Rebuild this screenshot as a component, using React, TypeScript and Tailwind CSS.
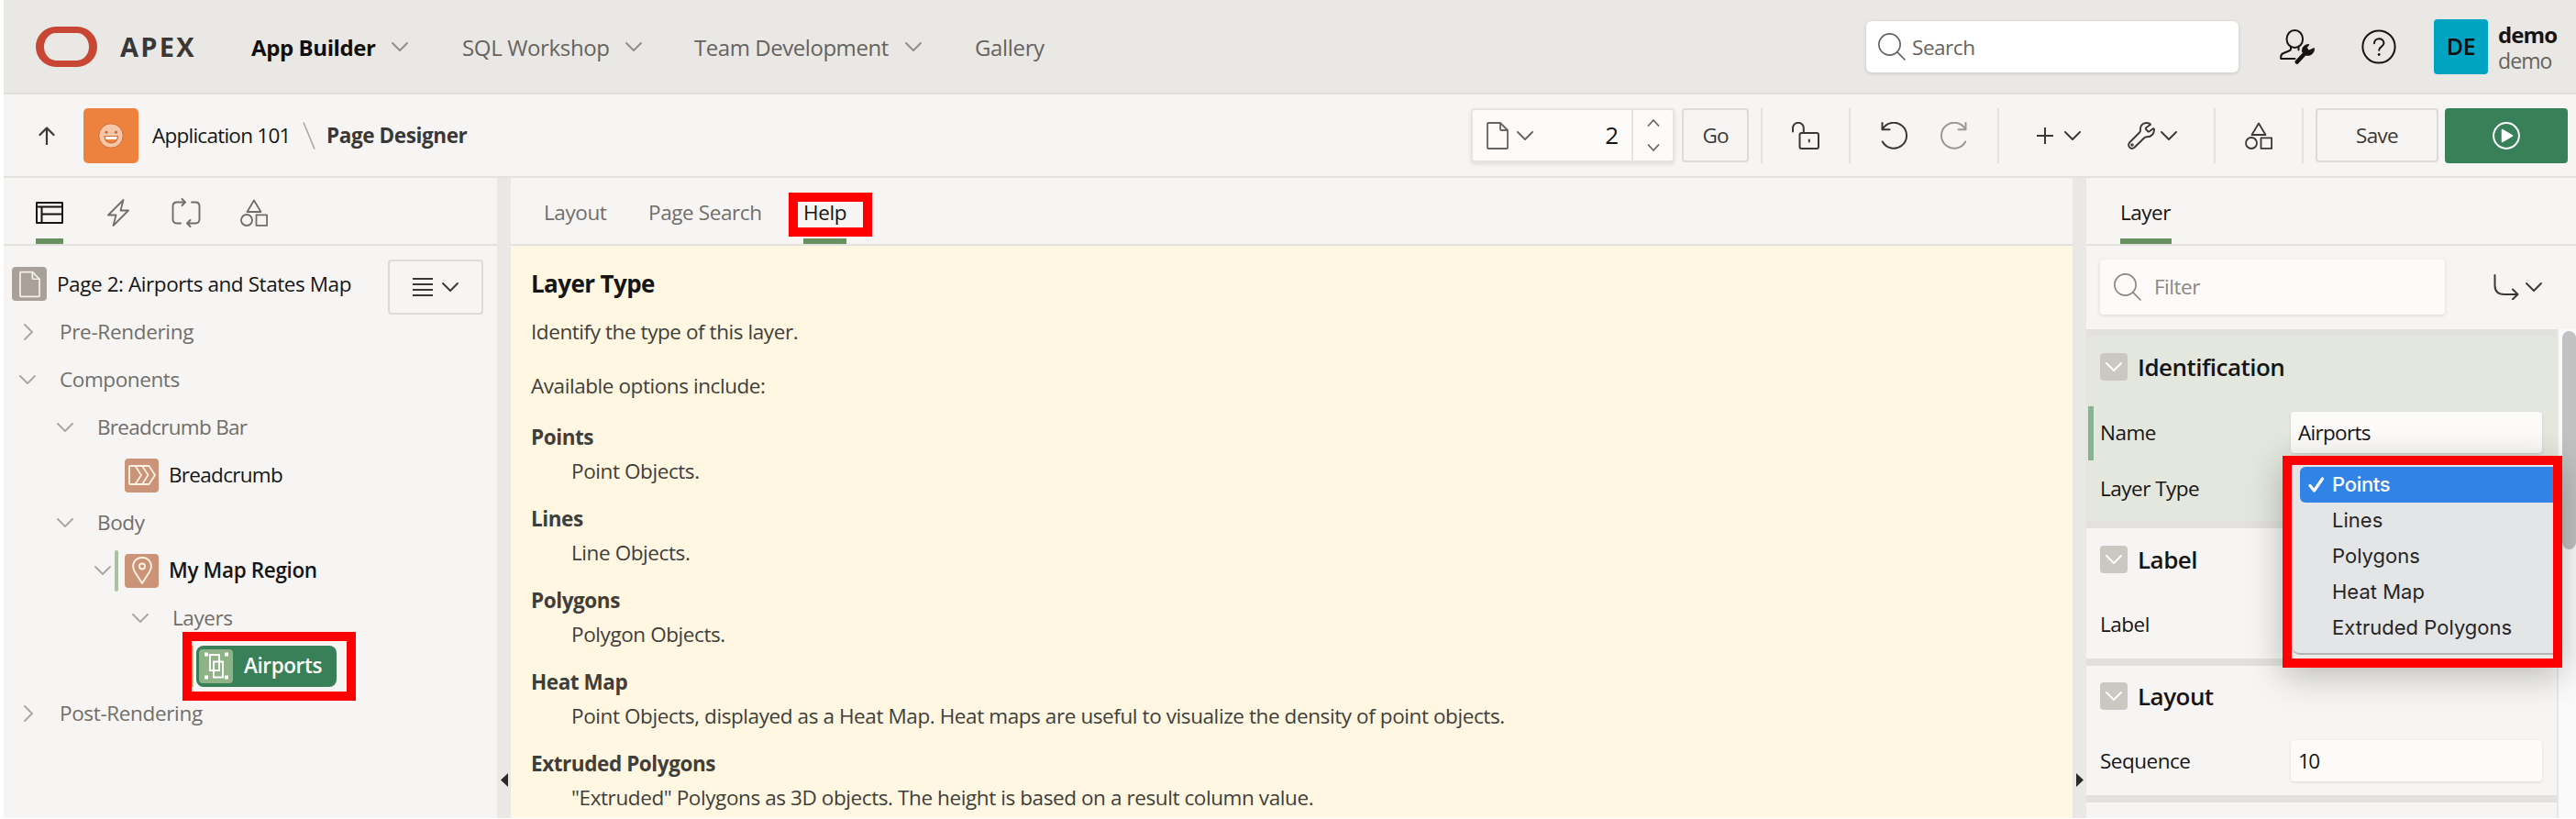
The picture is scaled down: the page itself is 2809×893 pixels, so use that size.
import type { ReactNode } from 'react';

type IconProps = { className?: string };

function Chevron({ className = '' }: IconProps) {
  return (
    <svg viewBox="0 0 18 10" className={'h-[10px] w-[18px] shrink-0 ' + className} fill="none" stroke="currentColor" strokeWidth="1.9" strokeLinecap="round" strokeLinejoin="round">
      <path d="M1 1 L9 9 L17 1" />
    </svg>
  );
}

function ChevronRight({ className = '' }: IconProps) {
  return (
    <svg viewBox="0 0 10 18" className={'h-[18px] w-[10px] shrink-0 ' + className} fill="none" stroke="currentColor" strokeWidth="1.9" strokeLinecap="round" strokeLinejoin="round">
      <path d="M1 1 L9 9 L1 17" />
    </svg>
  );
}

function SearchIcon({ className = '' }: IconProps) {
  return (
    <svg viewBox="0 0 30 30" className={'h-[30px] w-[30px] shrink-0 ' + className} fill="none" stroke="currentColor" strokeWidth="1.7" strokeLinecap="round">
      <circle cx="12.5" cy="12.5" r="11.6" />
      <path d="M20.7 20.7 L29 29" />
    </svg>
  );
}

function Shapes({ className = '' }: IconProps) {
  return (
    <svg viewBox="0 0 30 30" className={'h-[30px] w-[30px] shrink-0 ' + className} fill="none" stroke="currentColor" strokeWidth="1.8" strokeLinejoin="round">
      <path d="M15 1.5 L22.5 14 H7.5 Z" />
      <circle cx="7" cy="23" r="6" />
      <rect x="17.5" y="17.3" width="11.6" height="11.6" />
    </svg>
  );
}

function PageIcon({ className = 'w-[24px]' }: IconProps) {
  return (
    <svg viewBox="0 0 24 30" className={'h-[30px] shrink-0 ' + className} fill="none" stroke="currentColor" strokeWidth="1.8" strokeLinejoin="round">
      <path d="M2 1 H15 L23 9 V28 Q23 29 22 29 H2 Q1 29 1 28 V2 Q1 1 2 1 Z" />
      <path d="M15 1 V8 Q15 9 16 9 H23" />
    </svg>
  );
}

function Undo({ className = '' }: IconProps) {
  return (
    <svg viewBox="0 0 30 30" className={'h-[30px] w-[30px] shrink-0 ' + className} fill="none" stroke="currentColor" strokeWidth="2" strokeLinecap="round" strokeLinejoin="round">
      <path d="M1.5 1 V8.3 H9.5" />
      <path d="M1.8 8 A14 14 0 1 1 1.8 21.5" />
    </svg>
  );
}

function Divider({ className = '' }: IconProps) {
  return <div className={'h-[60px] w-[2px] shrink-0 bg-[#e3e2df] ' + className} />;
}

function Row({ children, className = '' }: { children: ReactNode; className?: string }) {
  return <div className={'flex h-[52px] shrink-0 items-center whitespace-nowrap ' + className}>{children}</div>;
}

function Header() {
  return (
    <header className="flex h-[103px] shrink-0 items-center whitespace-nowrap border-b-2 border-[#dfdedb] bg-[#eae8e4] pt-px text-[24px] text-[#66635f]">
      <div className="ml-[35px] h-[44px] w-[67px] shrink-0 rounded-[22px] border-x-[9px] border-y-[7px] border-[#c74634]" />
      <div className="ml-[25px] w-[143px] text-[29px] font-bold tracking-[2.3px] text-[#3a3835]">APEX</div>
      <div className="flex w-[230px] items-center">
        <div className="w-[153px] pt-[2px] font-bold tracking-[-0.4px] text-[#100f0e]">App Builder</div>
        <Chevron className="text-[#8f8c87]" />
      </div>
      <div className="flex w-[253px] items-center">
        <div className="w-[178px] pt-[2px] tracking-[-0.35px]">SQL Workshop</div>
        <Chevron className="text-[#8f8c87]" />
      </div>
      <div className="flex w-[306px] items-center">
        <div className="w-[230px] pt-[2px] tracking-[-0.45px]">Team Development</div>
        <Chevron className="text-[#8f8c87]" />
      </div>
      <div className="pt-[2px] tracking-[-0.35px]">Gallery</div>
      <div className="ml-auto mr-[45px] flex h-[56px] w-[406px] items-center rounded-[6px] bg-white pl-[13px] shadow-[0_1px_4px_rgba(0,0,0,0.15)]">
        <SearchIcon />
        <div className="ml-[7px] pt-[2px] text-[22.5px] tracking-[-0.45px]">Search</div>
      </div>
      <svg viewBox="0 0 38 38" className="mr-[51px] h-[38px] w-[38px] shrink-0 text-[#161513]" fill="none" stroke="currentColor" strokeWidth="2" strokeLinecap="round" strokeLinejoin="round">
        <ellipse cx="16.3" cy="10.500" rx="8.800" ry="9.500" />
        <path d="M12 19.500 V21.500 Q12 23 10 23.500 L4 26 Q1.200 27.200 1.200 30 V32 H16.500" />
        <path d="M20.500 19.500 V22.500" />
        <path d="M18.800 35.500 L28 25.500" strokeWidth="4.500" />
        <path d="M24.500 24.500 C23.500 20 27 16 32 16.500 L29.500 20 L31.500 23 L37.500 20.500 C38 26 33 30 28 28 Z" fill="currentColor" strokeWidth="0.800" />
      </svg>
      <svg viewBox="0 0 38 38" className="mr-[41px] h-[38px] w-[38px] shrink-0 text-[#161513]" fill="none" stroke="currentColor" strokeWidth="2" strokeLinecap="round">
        <circle cx="19" cy="19" r="17.600" />
        <path d="M14 15.200 C14 8.600 24.500 8.600 24.500 15 C24.500 19 19.200 18.800 19.200 22.800" />
        <circle cx="19.200" cy="27.500" r="1.400" fill="currentColor" stroke="none" />
      </svg>
      <div className="flex h-[60px] w-[59px] shrink-0 items-center justify-center rounded-[4px] bg-[#00a3c1] text-[25px] font-semibold tracking-[-0.5px] text-[#100f0e]">DE</div>
      <div className="ml-[11px] w-[85px] pt-[2px] text-[24px] leading-[29.5px]">
        <div className="font-bold tracking-[-0.9px] text-[#161513]">demo</div>
        <div className="text-[23px] tracking-[-0.9px]">demo</div>
      </div>
    </header>
  );
}

function Toolbar() {
  return (
    <div className="flex h-[91px] shrink-0 items-center whitespace-nowrap border-b-2 border-[#e3e2df] text-[22.5px] text-[#3a3835]">
      <svg viewBox="0 0 18 20" className="ml-[38px] h-[20px] w-[18px] shrink-0" fill="none" stroke="currentColor" strokeWidth="2.2" strokeLinecap="round" strokeLinejoin="round">
        <path d="M9 19 V1.5 M1.5 9 L9 1.5 L16.5 9" />
      </svg>
      <div className="ml-[31px] flex h-[60px] w-[60px] shrink-0 items-center justify-center rounded-[5px] bg-[#ed813e]">
        <svg viewBox="0 0 28 28" className="h-[28px] w-[28px]">
          <circle cx="14" cy="14" r="13.200" fill="#f6c6a8" stroke="#d0703a" strokeWidth="1" />
          <circle cx="9" cy="10.200" r="1.600" fill="#cf6c33" />
          <circle cx="19.500" cy="10.200" r="1.600" fill="#cf6c33" />
          <path d="M7 14.500 H21.500 C21.500 24.500 7 24.500 7 14.500 Z" fill="#ed813e" stroke="#cf6c33" strokeWidth="1.200" strokeLinejoin="round" />
          <path d="M7.800 15 H20.700 L20 18 H8.500 Z" fill="#fff" />
        </svg>
      </div>
      <div className="ml-[15px] w-[164px] tracking-[-0.75px] text-[#161513]">Application 101</div>
      <svg viewBox="0 0 14 30" className="h-[30px] w-[14px] shrink-0" stroke="#aaa7a2" strokeWidth="1.6">
        <path d="M1 0.500 L13 29.500" />
      </svg>
      <div className="ml-[12px] font-bold tracking-[-0.4px]">Page Designer</div>

      <div className="ml-auto flex h-[59px] w-[222px] shrink-0 items-center rounded-[4px] border-2 border-[#e5e4e1] bg-[#fcfbfa] text-[#66635f] shadow-[0_2px_4px_rgba(0,0,0,0.1)]">
        <PageIcon className="ml-[15px] w-[24px]" />
        <Chevron className="ml-[9px]" />
        <div className="ml-auto mr-[14px] text-[26px] text-[#161513]">2</div>
        <div className="flex h-full w-[45px] flex-col items-center justify-center gap-[19px] border-l-2 border-[#e5e4e1]">
          <svg viewBox="0 0 14 8" className="h-[8px] w-[14px]" fill="none" stroke="currentColor" strokeWidth="1.6"><path d="M1 7.500 L7 1 L13 7.500" /></svg>
          <svg viewBox="0 0 14 8" className="h-[8px] w-[14px]" fill="none" stroke="currentColor" strokeWidth="1.6"><path d="M1 0.500 L7 7 L13 0.500" /></svg>
        </div>
      </div>
      <div className="ml-[8px] flex h-[59px] w-[73px] shrink-0 items-center justify-center rounded-[4px] border-2 border-[#dcdbd8] tracking-[-0.9px]">Go</div>
      <Divider className="ml-[13px]" />
      <svg viewBox="0 0 30 30" className="ml-[32px] h-[30px] w-[30px] shrink-0" fill="none" stroke="currentColor" strokeWidth="2" strokeLinecap="round">
        <rect x="8.500" y="12" width="20.500" height="17" rx="2" />
        <path d="M1 10.500 V6.500 A5.900 5.700 0 0 1 12.800 6.500 V11" />
        <path d="M18.800 19.500 V21.500" />
      </svg>
      <Divider className="ml-[32px]" />
      <Undo className="ml-[33px]" />
      <Undo className="ml-[34px] -scale-x-100 text-[#9b9894]" />
      <Divider className="ml-[33px]" />
      <svg viewBox="0 0 18 18" className="ml-[41px] h-[18px] w-[18px] shrink-0" stroke="currentColor" strokeWidth="2"><path d="M9 0 V18 M0 9 H18" /></svg>
      <Chevron className="ml-[12px]" />
      <svg viewBox="0 0 30 30" className="ml-[51px] h-[30px] w-[30px] shrink-0" fill="none" stroke="currentColor" strokeWidth="1.900" strokeLinejoin="round">
        <path d="M24.800 3 C25.500 1.800 23 1 20.500 1 C16 1 13.500 4.500 14 9 Q14 10.500 13 11.500 L2.500 22 C-1 26 3.500 31 7.500 27.800 L18 17.500 Q19 16.500 21 16.300 C26 16.300 29.200 13 29 8 Q28.500 6.800 27.500 7.500 L23.500 10.500 Q22.500 11 22 10 L20 7.800 Q19.500 6.800 20.500 6 Z" />
        <circle cx="5" cy="25" r="0.700" fill="currentColor" />
      </svg>
      <Chevron className="ml-[6px]" />
      <Divider className="ml-[40px]" />
      <Shapes className="ml-[32px]" />
      <Divider className="ml-[32px]" />
      <div className="ml-[13px] flex h-[59px] w-[134px] shrink-0 items-center justify-center rounded-[4px] border-2 border-[#dcdbd8] tracking-[-0.7px]">Save</div>
      <div className="ml-[7px] mr-[9px] flex h-[60px] w-[134px] shrink-0 items-center justify-center rounded-[4px] bg-[#388057]">
        <svg viewBox="0 0 30 30" className="h-[30px] w-[30px]">
          <circle cx="15" cy="15" r="13.900" fill="none" stroke="#fff" strokeWidth="2" />
          <path d="M10.500 8.500 L21.500 15 L10.500 21.500 Z" fill="#fff" stroke="#fff" strokeWidth="1.500" strokeLinejoin="round" />
        </svg>
      </div>
    </div>
  );
}

function TreePanel() {
  return (
    <aside className="flex w-[538px] shrink-0 flex-col text-[22.5px] text-[#716e6a]">
      <div className="flex h-[74px] shrink-0 items-stretch border-b-2 border-[#e3e2df]">
        <div className="ml-[35px] flex w-[30px] flex-col justify-between text-[#161513]">
          <svg viewBox="0 0 30 24" className="mt-[26px] h-[24px] w-[30px]" fill="none" stroke="currentColor" strokeWidth="2" strokeLinejoin="round">
            <path d="M1 1 H29 V23 H1 Z M1 5.500 H29 M6.500 5.500 V23 M6.500 13.500 H29" />
          </svg>
          <div className="h-[6px] bg-[#699061]" />
        </div>
        <svg viewBox="0 0 24 30" className="ml-[48px] mt-[23px] h-[30px] w-[24px]" fill="none" stroke="currentColor" strokeWidth="1.800" strokeLinejoin="round">
          <path d="M17.500 1 L1 17.500 H9.500 L6.500 29 L23 12.500 H14.500 Z" />
        </svg>
        <svg viewBox="0 0 32 32" className="ml-[46px] mt-[22px] h-[32px] w-[32px]" fill="none" stroke="currentColor" strokeWidth="1.900" strokeLinecap="round" strokeLinejoin="round">
          <path d="M10 27.500 H6 Q1.500 27.500 1.500 23 V9 Q1.500 4.500 6 4.500 H15 M11.500 1 L15 4.500 L11.500 8" />
          <path d="M22 4.500 H26 Q30.500 4.500 30.500 9 V23 Q30.500 27.500 26 27.500 H17 M20.500 24 L17 27.500 L20.500 31" />
        </svg>
        <Shapes className="ml-[43px] mt-[23px]" />
      </div>

      <div className="relative flex flex-1 flex-col pt-[16px]">
        <div className="flex h-[52px] shrink-0 items-start whitespace-nowrap">
          <div className="ml-[9px] mt-[7px] flex h-[37px] w-[38px] items-center justify-center rounded-[4px] bg-[#a9a199] text-[#f3f1ee]">
            <PageIcon className="w-[23px]" />
          </div>
          <div className="ml-[11px] w-[361px] tracking-[-0.42px] leading-[52px] text-[#161513]">Page 2: Airports and States Map</div>
          <div className="-mt-px flex h-[60px] w-[104px] shrink-0 items-center justify-center gap-[10px] rounded-[4px] border-2 border-[#dcdbd8] text-[#3a3835]">
            <svg viewBox="0 0 22 20" className="h-[20px] w-[22px]" stroke="currentColor" strokeWidth="2"><path d="M0 1 H22 M0 7 H22 M0 13 H22 M0 19 H22" /></svg>
            <Chevron />
          </div>
        </div>
        <Row className="pl-[22px]"><ChevronRight className="mr-[29px] text-[#aaa7a2]" /><span className="tracking-[-0.32px]">Pre-Rendering</span></Row>
        <Row className="pl-[17px]"><Chevron className="mr-[26px] text-[#aaa7a2]" /><span className="tracking-[-0.4px]">Components</span></Row>
        <Row className="pl-[58px]"><Chevron className="mr-[26px] text-[#aaa7a2]" /><span className="tracking-[-0.7px]">Breadcrumb Bar</span></Row>
        <Row className="pl-[132px] text-[#161513]">
          <div className="mr-[11px] flex h-[37px] w-[37px] items-center justify-center rounded-[4px] bg-[#cb9378]">
            <svg viewBox="0 0 30 22" className="h-[22px] w-[30px]" fill="none" stroke="#fff3e4" strokeWidth="1.800" strokeLinejoin="round">
              <path d="M1 2 Q1 1 2 1 H22.500 L29 11 L22.500 21 H2 Q1 21 1 20 Z M7.500 1 L14 11 L7.500 21 M15 1 L21.500 11 L15 21" />
            </svg>
          </div>
          <span className="tracking-[-0.7px]">Breadcrumb</span>
        </Row>
        <Row className="pl-[58px]"><Chevron className="mr-[26px] text-[#aaa7a2]" /><span className="tracking-[-0.4px]">Body</span></Row>
        <Row className="pl-[99px] text-[#161513]">
          <Chevron className="text-[#aaa7a2]" />
          <div className="ml-[4px] h-[45px] w-[4px] rounded-full bg-[#a8c3a2]" />
          <div className="ml-[7px] mr-[11px] flex h-[37px] w-[37px] items-center justify-center rounded-[4px] bg-[#cb9378]">
            <svg viewBox="0 0 22 30" className="h-[30px] w-[22px]" fill="none" stroke="#fff3e4" strokeWidth="1.900" strokeLinejoin="round">
              <path d="M11 29 L3 16.500 C-2 8 4 1 11 1 C18 1 24 8 19 16.500 Z" />
              <circle cx="11" cy="10.500" r="3" />
            </svg>
          </div>
          <span className="font-semibold tracking-[-0.35px]">My Map Region</span>
        </Row>
        <Row className="pl-[140px]"><Chevron className="mr-[26px] text-[#aaa7a2]" /><span className="tracking-[-0.4px]">Layers</span></Row>
        <Row className="pl-[205px]">
          <div className="h-[45px] w-[2px] bg-[#a8c3a2]" />
          <div className="ml-[3px] flex h-[45px] w-[153px] items-center rounded-[8px] bg-[#388057] pl-[3px] text-white">
            <div className="mr-[12px] flex h-[37px] w-[37px] items-center justify-center rounded-[4px] bg-[#8fb287]">
              <svg viewBox="0 0 28 30" className="h-[30px] w-[28px]" fill="none" stroke="#fff" strokeWidth="1.900">
                <path d="M7 3 H17 V20 H7 Z M11 10.500 H21 V27.500 H11 Z" />
                <path d="M1 0.500 H5 V4.500 H1 Z M23 0.500 H27 V4.500 H23 Z M1 25.500 H5 V29.500 H1 Z M23 25.500 H27 V29.500 H23 Z" fill="#fff" stroke="none" />
              </svg>
            </div>
            <span className="font-semibold tracking-[-0.4px]">Airports</span>
          </div>
        </Row>
        <Row className="pl-[22px]"><ChevronRight className="mr-[29px] text-[#aaa7a2]" /><span className="tracking-[-0.35px]">Post-Rendering</span></Row>
        <div className="absolute left-[195px] top-[421px] h-[75px] w-[189px] border-[10px] border-[#fe0000]" />
      </div>
    </aside>
  );
}

const options: [string, string][] = [
  ['Points', 'Point Objects.'],
  ['Lines', 'Line Objects.'],
  ['Polygons', 'Polygon Objects.'],
  ['Heat Map', 'Point Objects, displayed as a Heat Map. Heat maps are useful to visualize the density of point objects.'],
  ['Extruded Polygons', '"Extruded" Polygons as 3D objects. The height is based on a result column value.'],
];

function HelpPanel() {
  return (
    <main className="flex min-w-0 flex-1 flex-col text-[22.5px]">
      <div className="flex h-[74px] shrink-0 items-stretch whitespace-nowrap border-b-2 border-[#e3e2df] pl-[36px] leading-[76px] tracking-[-0.4px] text-[#716e6a]">
        <div className="w-[114px]">Layout</div>
        <div className="w-[169px]">Page Search</div>
        <div className="relative flex w-[47px] flex-col justify-end text-[#161513]">
          <span className="h-[66px] leading-[76px]">Help</span>
          <div className="h-[6px] bg-[#699061]" />
          <div className="absolute -left-[16px] top-[16px] h-[48px] w-[91px] border-[10px] border-[#fe0000]" />
        </div>
      </div>
      <div className="flex-1 overflow-hidden whitespace-nowrap bg-[#fff7e1] pl-[22px] pt-[23px] leading-[37px] tracking-[-0.43px] text-[#403e3a]">
        <h1 className="text-[26px] font-bold tracking-[-0.6px] text-[#161513]">Layer Type</h1>
        <p className="mt-[15px]">Identify the type of this layer.</p>
        <p className="mt-[22px]">Available options include:</p>
        <dl className="mt-[19px]">
          {options.map(([name, text]) => (
            <div key={name} className="mb-[15.1px]">
              <dt className="font-bold">{name}</dt>
              <dd className="pl-[44px] tracking-[-0.41px]">{text}</dd>
            </div>
          ))}
        </dl>
      </div>
    </main>
  );
}

function Splitter({ direction }: { direction: 'left' | 'right' }) {
  return (
    <div className="flex w-[15px] shrink-0 flex-col items-center bg-[#eae8e4] pt-[649px]">
      <svg viewBox="0 0 8 15" className="h-[15px] w-[8px]" fill="#2b2927">
        {direction === 'left' ? <path d="M8 0 V15 L0 7.500 Z" /> : <path d="M0 0 V15 L8 7.500 Z" />}
      </svg>
    </div>
  );
}

function SectionTitle({ children }: { children: ReactNode }) {
  return (
    <div className="flex items-center pl-[15px]">
      <div className="flex h-[30px] w-[30px] items-center justify-center rounded-[4px] bg-[#cbc8c2] text-white">
        <Chevron />
      </div>
      <div className="ml-[11px] text-[26px] font-semibold leading-[30px] tracking-[-0.53px]">{children}</div>
    </div>
  );
}

const menuItems = ['Points', 'Lines', 'Polygons', 'Heat Map', 'Extruded Polygons'];

function LayerTypeMenu() {
  return (
    <div className="absolute left-[214px] top-[138px] h-[231px] w-[305px] border-[10px] border-[#fe0000] bg-[#ecebe9] shadow-[0_8px_36px_rgba(0,0,0,0.25)]">
      <div className="h-[207px] rounded-bl-[9px] border-b-2 border-[#b5b5b5] bg-[#e4e5e6] pl-[9px] pt-[2px] font-[Inter] text-[22px] text-[#262626]">
        {menuItems.map((item, i) => (
          <div key={item} className={'flex h-[39px] items-center rounded-l-[6px] pl-[9px] ' + (i === 0 ? 'bg-[#3183e8] font-medium tracking-[-0.3px] text-white' : 'tracking-[0.02px]')}>
            <div className="w-[26px]">
              {i === 0 && (
                <svg viewBox="0 0 18 17" className="h-[17px] w-[18px]" fill="none" stroke="#fff" strokeWidth="3.200" strokeLinecap="round" strokeLinejoin="round"><path d="M2 9.500 L6.500 15 L15.500 2" /></svg>
              )}
            </div>
            {item}
          </div>
        ))}
      </div>
    </div>
  );
}

function PropertyPanel() {
  return (
    <aside className="flex w-[534px] shrink-0 flex-col whitespace-nowrap text-[22.5px] tracking-[-0.5px] text-[#161513]">
      <div className="flex h-[74px] shrink-0 border-b-2 border-[#e3e2df] pl-[37px]">
        <div className="flex w-[56px] flex-col justify-end">
          <span className="h-[66px] leading-[76px]">Layer</span>
          <div className="h-[6px] bg-[#699061]" />
        </div>
      </div>
      <div className="flex h-[91px] shrink-0 items-start pl-[15px] pt-[15px]">
        <div className="flex h-[60px] w-[376px] items-center rounded-[4px] bg-[#fcfbfa] pl-[15px] text-[#8a8784] shadow-[0_1px_4px_rgba(0,0,0,0.12)]">
          <SearchIcon />
          <span className="ml-[14px]">Filter</span>
        </div>
        <div className="ml-[53px] flex h-[60px] items-center text-[#3a3835]">
          <svg viewBox="0 0 28 28" className="h-[28px] w-[28px]" fill="none" stroke="currentColor" strokeWidth="2" strokeLinecap="round" strokeLinejoin="round">
            <path d="M1.500 1 V12 Q1.500 22 12 22 H26.500 M21 16.500 L26.500 22 L21 27.200" />
          </svg>
          <Chevron className="ml-[7px]" />
        </div>
      </div>
      <div className="relative flex min-h-0 flex-1">
        <div className="flex w-[513px] flex-col">
          <div className="h-[217px] border-y-8 border-[#e3e1dd] bg-[#e4e7de] pt-[18px]">
            <SectionTitle>Identification</SectionTitle>
            <div className="mt-[28px] flex h-[59px] items-center pl-[2px]">
              <div className="h-[59px] w-[6px] bg-[#8bb195]" />
              <div className="ml-[7px] w-[208px] pb-[2px]">Name</div>
              <div className="-mt-[2px] h-[45px] w-[274px] rounded-[4px] bg-[#fcfbfa] pl-[8px] leading-[45px] tracking-[-0.7px] shadow-[0_1px_3px_rgba(0,0,0,0.12)]">Airports</div>
            </div>
            <div className="h-[62px] pl-[15px] leading-[61px]">Layer Type</div>
          </div>
          <div className="h-[150px] border-b-8 border-[#e3e1dd] pt-[19px]">
            <SectionTitle>Label</SectionTitle>
            <div className="mt-[33px] h-[45px] pl-[15px] leading-[45px]">Label</div>
          </div>
          <div className="h-[149px] border-b-8 border-[#e3e1dd] pt-[18px]">
            <SectionTitle>Layout</SectionTitle>
            <div className="mt-[33px] flex items-center pl-[15px]">
              <div className="w-[208px]">Sequence</div>
              <div className="h-[45px] w-[274px] rounded-[4px] bg-[#fcfbfa] pl-[8px] leading-[45px] tracking-[-1.500px] shadow-[0_1px_3px_rgba(0,0,0,0.12)]">10</div>
            </div>
          </div>
        </div>
        <div className="w-[21px] border-l-2 border-[#e8e7e5] bg-[#fafafa] pl-[4px] pt-[2px]">
          <div className="h-[238px] w-[15px] rounded-full bg-[#c1c1c1]" />
        </div>
        <LayerTypeMenu />
      </div>
    </aside>
  );
}

export default function App() {
  return (
    <div className="flex h-[893px] w-[2809px] flex-col overflow-hidden border-b border-l-4 border-white bg-[#f6f5f3] font-['Open_Sans',sans-serif]">
      <Header />
      <Toolbar />
      <div className="flex min-h-0 flex-1">
        <TreePanel />
        <Splitter direction="left" />
        <HelpPanel />
        <Splitter direction="right" />
        <PropertyPanel />
      </div>
    </div>
  );
}
